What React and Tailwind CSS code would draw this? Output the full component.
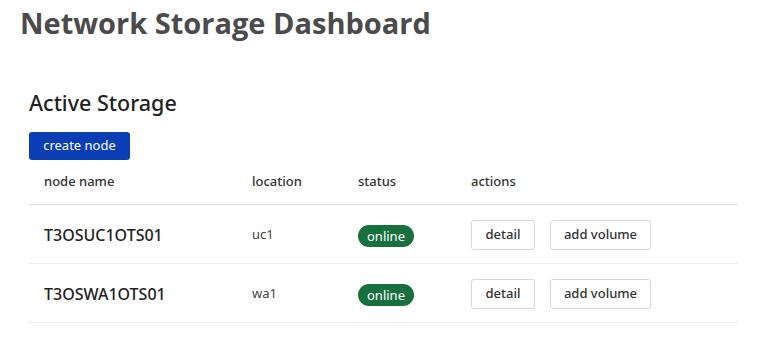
const nodes = [
  { name: 'T3OSUC1OTS01', location: 'uc1', status: 'online' },
  { name: 'T3OSWA1OTS01', location: 'wa1', status: 'online' },
];

const cols = 'grid grid-cols-[208px_106px_113px_1fr] items-center pl-[15px]';

export default function App() {
  return (
    <div className="min-h-screen bg-white font-['Noto_Sans',sans-serif]">
      <h1 className="pl-5 pt-[5px] font-['Open_Sans',sans-serif] text-[29px] leading-9 font-bold text-[#4b4b4b]">
        Network Storage Dashboard
      </h1>

      <div className="mt-12 pl-[29px] pr-[35px]">
        <h2 className="text-[21.5px] leading-7 font-medium text-[#222]">Active Storage</h2>

        <button className="mt-[15px] h-7 w-[101px] rounded-[3px] bg-[#0b3db5] text-[13px] text-white">
          create node
        </button>

        <div className={`${cols} h-[45px] border-b border-[#dcdcdc] text-[13px] font-medium text-[#333]`}>
          <div>node name</div>
          <div>location</div>
          <div>status</div>
          <div>actions</div>
        </div>

        {nodes.map((n) => (
          <div key={n.name} className={`${cols} h-[59px] border-b border-[#ececec] pt-[2px]`}>
            <div className="text-[16px] font-medium text-[#222]">{n.name}</div>
            <div className="text-[13px] text-[#444]">{n.location}</div>
            <div>
              <span className="inline-flex h-[22px] w-[56px] items-center justify-center rounded-full bg-[#18703f] text-[13px] text-white">
                {n.status}
              </span>
            </div>
            <div className="flex gap-[15px]">
              <button className="h-[30px] w-[64px] rounded-[3px] border border-[#d8d8d8] bg-white text-[13px] font-medium text-[#333]">
                detail
              </button>
              <button className="h-[30px] w-[101px] rounded-[3px] border border-[#d8d8d8] bg-white text-[13px] font-medium text-[#333]">
                add volume
              </button>
            </div>
          </div>
        ))}
      </div>
    </div>
  );
}
